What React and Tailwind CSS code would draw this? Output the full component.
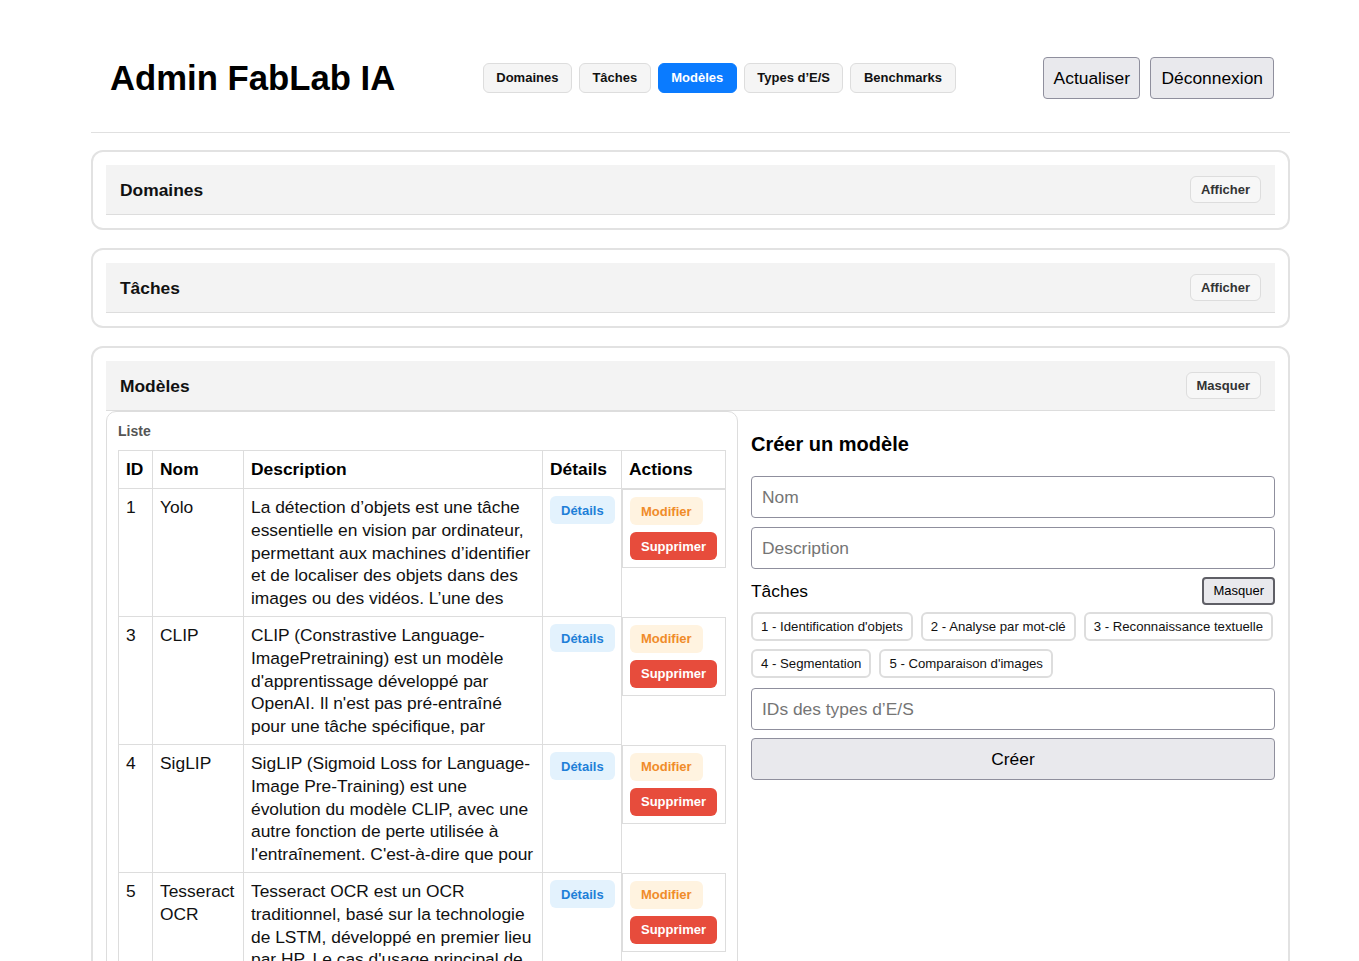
import React from "react";

const NAV = ["Domaines", "Tâches", "Modèles", "Types d’E/S", "Benchmarks"];

const MODELS = [
  {
    id: 1,
    name: "Yolo",
    desc: "La détection d’objets est une tâche essentielle en vision par ordinateur, permettant aux machines d’identifier et de localiser des objets dans des images ou des vidéos. L’une des",
  },
  {
    id: 3,
    name: "CLIP",
    desc: "CLIP (Constrastive Language-ImagePretraining) est un modèle d'apprentissage développé par OpenAI. Il n'est pas pré-entraîné pour une tâche spécifique, par",
  },
  {
    id: 4,
    name: "SigLIP",
    desc: "SigLIP (Sigmoid Loss for Language-Image Pre-Training) est une évolution du modèle CLIP, avec une autre fonction de perte utilisée à l'entraînement. C'est-à-dire que pour",
  },
  {
    id: 5,
    name: "Tesseract OCR",
    desc: "Tesseract OCR est un OCR traditionnel, basé sur la technologie de LSTM, développé en premier lieu par HP. Le cas d'usage principal de cet outil",
  },
];

const TASKS = [
  "1 - Identification d'objets",
  "2 - Analyse par mot-clé",
  "3 - Reconnaissance textuelle",
  "4 - Segmentation",
  "5 - Comparaison d'images",
];

function SectionBar({ title, action }) {
  return (
    <div className="flex h-[50px] items-center justify-between border-b border-[#dddddd] bg-[#f3f3f3] px-[14px]">
      <h2 className="pt-[1px] text-[17.4px] font-bold text-[#111]">{title}</h2>
      <button className="h-[27px] rounded-[6px] border border-[#dddddd] bg-[#f7f7f7] px-[10px] text-[13px] font-bold text-[#333]">
        {action}
      </button>
    </div>
  );
}

function Card({ children }) {
  return (
    <section className="rounded-[12px] border-2 border-[#e2e2e2] p-[13px]">
      {children}
    </section>
  );
}

function ModelRow({ m }) {
  return (
    <tr>
      <td className="border border-[#dddddd] px-[7px] pb-[6px] pt-[7px] align-top">{m.id}</td>
      <td className="border border-[#dddddd] px-[7px] pb-[6px] pt-[7px] align-top">{m.name}</td>
      <td className="border border-[#dddddd] px-[7px] pb-[6px] pt-[7px] align-top">
        <div className="h-[114px] overflow-hidden">{m.desc}</div>
      </td>
      <td className="border border-[#dddddd] px-[7px] pb-[6px] pt-[7px] align-top">
        <button className="h-[28px] rounded-[6px] bg-[#e3f2fd] px-[11px] text-[13px] font-bold leading-none text-[#1e7fd8]">
          Détails
        </button>
      </td>
      <td className="p-0 align-top">
        <div className="flex flex-col items-start gap-[7px] border border-[#dddddd] p-[7px]">
          <button className="h-[28px] rounded-[6px] bg-[#fff3e0] px-[11px] text-[13px] font-bold leading-none text-[#f08c2a]">
            Modifier
          </button>
          <button className="h-[28px] rounded-[6px] bg-[#e74c3c] px-[11px] text-[13px] font-bold leading-none text-white">
            Supprimer
          </button>
        </div>
      </td>
    </tr>
  );
}

export default function App() {
  return (
    <div
      className="min-h-screen bg-white pt-[24px] text-[#111]"
      style={{ fontFamily: '"Liberation Sans", Arial, sans-serif' }}
    >
      <div className="ml-[91px] w-[1199px] pb-10">
        {/* top bar */}
        <header className="flex h-[109px] items-center justify-between border-b border-[#e0e0e0] pl-[19px] pr-[16px]">
          <h1 className="text-[34.7px] font-bold leading-none text-black">Admin FabLab IA</h1>
          <nav className="flex gap-[7px]">
            {NAV.map((n) =>
              n === "Modèles" ? (
                <button
                  key={n}
                  className="h-[30px] rounded-[6px] border border-[#0a7bff] bg-[#0a7bff] px-[12.5px] text-[13px] font-bold text-white"
                >
                  {n}
                </button>
              ) : (
                <button
                  key={n}
                  className="h-[30px] rounded-[6px] border border-[#dddddd] bg-[#f5f5f5] px-[12.5px] text-[13px] font-bold text-[#111]"
                >
                  {n}
                </button>
              )
            )}
          </nav>
          <div className="flex gap-[10px]">
            <button className="h-[42px] rounded-[4px] border border-[#8f8f9d] bg-[#e9e9ed] px-[9.5px] text-[17.4px] text-black">
              Actualiser
            </button>
            <button className="h-[42px] rounded-[4px] border border-[#8f8f9d] bg-[#e9e9ed] px-[10px] text-[17.4px] text-black">
              Déconnexion
            </button>
          </div>
        </header>

        <div className="mt-[17px] flex flex-col gap-[18px]">
          <Card>
            <SectionBar title="Domaines" action="Afficher" />
          </Card>
          <Card>
            <SectionBar title="Tâches" action="Afficher" />
          </Card>
          <Card>
            <SectionBar title="Modèles" action="Masquer" />
            <div className="grid grid-cols-[1.2fr_1fr] gap-[13px]">
              {/* model list */}
              <div className="rounded-t-[10px] border border-[#dddddd] px-[11px] pb-[12px] pt-[11px]">
                <div className="mb-[10px] text-[14px] font-bold leading-[17px] text-[#555]">Liste</div>
                <table className="w-[607px] table-fixed border-collapse text-left text-[17.4px] leading-[22.75px]">
                  <colgroup>
                    <col className="w-[34px]" />
                    <col className="w-[91px]" />
                    <col className="w-[299px]" />
                    <col className="w-[79px]" />
                    <col className="w-[104px]" />
                  </colgroup>
                  <thead>
                    <tr>
                      {["ID", "Nom", "Description", "Détails", "Actions"].map((h) => (
                        <th
                          key={h}
                          className="border border-[#dddddd] px-[7px] py-[7px] text-left align-top font-bold leading-[23px] text-black"
                        >
                          {h}
                        </th>
                      ))}
                    </tr>
                  </thead>
                  <tbody>
                    {MODELS.map((m) => (
                      <ModelRow key={m.id} m={m} />
                    ))}
                  </tbody>
                </table>
              </div>

              {/* creation form */}
              <div className="flex flex-col">
                <h3 className="mt-[22px] text-[20px] font-bold leading-[23px] text-black">Créer un modèle</h3>
                <input
                  placeholder="Nom"
                  className="mt-[20px] h-[42px] w-full rounded-[4px] border border-[#8f8f9d] px-[10px] text-[17.4px] outline-none placeholder:text-[#757575]"
                />
                <input
                  placeholder="Description"
                  className="mt-[9px] h-[42px] w-full rounded-[4px] border border-[#8f8f9d] px-[10px] text-[17.4px] outline-none placeholder:text-[#757575]"
                />
                <div className="mt-[8px] flex items-center justify-between">
                  <span className="text-[17.4px] text-black">Tâches</span>
                  <button className="h-[28px] rounded-[4px] border-2 border-[#5f5f66] bg-[#e9e9ed] px-[9px] text-[13px] text-black">
                    Masquer
                  </button>
                </div>
                <div className="mt-[7px] flex flex-wrap gap-[8px]">
                  {TASKS.map((t) => (
                    <button
                      key={t}
                      className="h-[29px] rounded-[6px] border-2 border-[#dddddd] bg-white px-[8px] text-[13.2px] text-[#111]"
                    >
                      {t}
                    </button>
                  ))}
                </div>
                <input
                  placeholder="IDs des types d’E/S"
                  className="mt-[10px] h-[42px] w-full rounded-[4px] border border-[#8f8f9d] px-[10px] text-[17.4px] outline-none placeholder:text-[#757575]"
                />
                <button className="mt-[8px] h-[42px] w-full rounded-[4px] border border-[#8f8f9d] bg-[#e9e9ed] text-[17.4px] text-black">
                  Créer
                </button>
              </div>
            </div>
          </Card>
        </div>
      </div>
    </div>
  );
}
